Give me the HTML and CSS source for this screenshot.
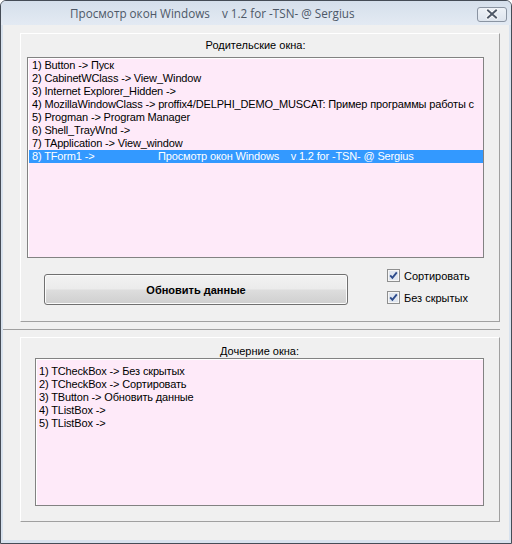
FILE: index.html
```html
<!DOCTYPE html>
<html>
<head>
<meta charset="utf-8">
<link rel="stylesheet" href="styles.css">
</head>
<body>
<div class="window">
  <div class="titlebar">
    <span class="title">Просмотр окон Windows    v 1.2 for -TSN- @ Sergius</span>
    <span class="close">
      <svg width="30" height="15" viewBox="0 0 30 15">
        <path d="M11 3.5 L19 10.5 M19 3.5 L11 10.5" fill="none" stroke="#ffffff" stroke-width="3.6" stroke-linecap="square"/>
        <path d="M11 3.5 L19 10.5 M19 3.5 L11 10.5" fill="none" stroke="#4f5968" stroke-width="2" stroke-linecap="square"/>
      </svg>
    </span>
  </div>
  <div class="client">
    <div class="panel panel-top">
      <div class="caption caption-top">Родительские окна:</div>
      <ul class="listbox listbox-top">
        <li>1) Button -&gt; Пуск</li>
        <li>2) CabinetWClass -&gt; View_Window</li>
        <li>3) Internet Explorer_Hidden -&gt;</li>
        <li>4) MozillaWindowClass -&gt; proffix4/DELPHI_DEMO_MUSCAT: Пример программы работы с</li>
        <li>5) Progman -&gt; Program Manager</li>
        <li>6) Shell_TrayWnd -&gt;</li>
        <li>7) TApplication -&gt; View_window</li>
        <li class="selected"><span class="tabstop">8) TForm1 -&gt;</span>Просмотр окон Windows    v 1.2 for -TSN- @ Sergius</li>
      </ul>
      <div class="controls">
        <button class="btn" type="button">Обновить данные</button>
        <div class="checks">
          <label class="check">
            <svg class="box" width="13" height="13" viewBox="0 0 13 13">
              <rect x="0.5" y="0.5" width="12" height="12" fill="#f6f6f6" stroke="#8e8f8f"/>
              <rect x="2" y="2" width="9" height="9" fill="#dfe6f0"/>
              <path d="M3.2 6.4 L5.4 8.8 L9.8 3.4" fill="none" stroke="#2c4b8c" stroke-width="1.9"/>
            </svg>
            <span>Сортировать</span>
          </label>
          <label class="check">
            <svg class="box" width="13" height="13" viewBox="0 0 13 13">
              <rect x="0.5" y="0.5" width="12" height="12" fill="#f6f6f6" stroke="#8e8f8f"/>
              <rect x="2" y="2" width="9" height="9" fill="#dfe6f0"/>
              <path d="M3.2 6.4 L5.4 8.8 L9.8 3.4" fill="none" stroke="#2c4b8c" stroke-width="1.9"/>
            </svg>
            <span>Без скрытых</span>
          </label>
        </div>
      </div>
    </div>
    <div class="splitter"></div>
    <div class="panel panel-bottom">
      <div class="caption caption-bottom">Дочерние окна:</div>
      <ul class="listbox listbox-bottom">
        <li>1) TCheckBox -&gt; Без скрытых</li>
        <li>2) TCheckBox -&gt; Сортировать</li>
        <li>3) TButton -&gt; Обновить данные</li>
        <li>4) TListBox -&gt;</li>
        <li>5) TListBox -&gt;</li>
      </ul>
    </div>
  </div>
</div>
</body>
</html>
```
FILE: styles.css
```css
html, body {
  margin: 0;
  padding: 0;
}
body {
  width: 512px;
  height: 544px;
  overflow: hidden;
  background: #ffffff;
  font-family: "Liberation Sans", Arial, sans-serif;
  font-size: 11px;
  color: #000000;
}
.window {
  width: 512px;
  height: 544px;
  box-sizing: border-box;
  border: 1px solid #454c56;
  border-radius: 6px 6px 0 0;
  background: #d8e2ee;
  display: flex;
  flex-direction: column;
  overflow: hidden;
}
.titlebar {
  height: 24px;
  flex: none;
  display: flex;
  align-items: flex-start;
  background: linear-gradient(#d5dfeb, #e3eaf3);
}
.title {
  flex: 1;
  padding-left: 69px;
  padding-top: 4px;
  font-family: "Open Sans", "Noto Sans", sans-serif;
  font-size: 11.7px;
  line-height: 16px;
  color: #4d5867;
  white-space: pre;
}
.close {
  flex: none;
  width: 30px;
  height: 15px;
  margin-top: 6px;
  margin-right: 4px;
  box-sizing: border-box;
  border: 1px solid #8a94a2;
  border-radius: 3px;
  background: linear-gradient(#eef2f7, #dde4ed);
  display: flex;
}
.close svg {
  margin: -1px;
}
.client {
  flex: 1;
  margin: 0 2px 3px 2px;
  background: #f0f0f0;
  padding: 8px 9px 0 17px;
  display: flex;
  flex-direction: column;
}
.panel {
  box-sizing: border-box;
  width: 480px;
  border-top: 1px solid #ffffff;
  border-left: 1px solid #ffffff;
  border-right: 1px solid #a0a0a0;
  border-bottom: 1px solid #a0a0a0;
  display: flex;
  flex-direction: column;
}
.panel-top {
  height: 289px;
}
.panel-bottom {
  height: 185px;
}
.splitter {
  height: 15px;
  margin-left: -17px;
  width: 497px;
  box-sizing: border-box;
  padding-top: 7px;
}
.splitter::before {
  content: "";
  display: block;
  height: 1px;
  background: #a0a0a0;
}
.caption {
  text-align: center;
  white-space: pre;
}
.caption-top {
  height: 23px;
  line-height: 23px;
  padding-left: 6px;
  width: 457px;
}
.caption-bottom {
  height: 13px;
  line-height: 13px;
  padding-top: 7px;
  padding-left: 14px;
  width: 449px;
}
.listbox {
  list-style: none;
  margin: 0;
  box-sizing: border-box;
  background: #feeaf9;
  border: 1px solid #828282;
  box-shadow: inset 1px 1px 0 #ffffff;
  overflow: hidden;
  letter-spacing: -0.15px;
}
.listbox li {
  height: 13px;
  line-height: 13px;
  white-space: pre;
  overflow: hidden;
  padding-left: 3px;
}
.listbox-top {
  margin-left: 6px;
  width: 457px;
  height: 201px;
  padding: 1px 0 0 1px;
}
.listbox-bottom {
  margin-left: 14px;
  width: 449px;
  height: 148px;
  padding: 6px 0 0 1px;
}
.listbox-bottom li {
  padding-left: 2px;
}
.listbox li.selected {
  background: #3399ff;
  color: #ffffff;
}
.tabstop {
  display: inline-block;
  width: 126px;
}
.controls {
  display: flex;
  align-items: flex-start;
}
.btn {
  margin: 16px 0 0 23px;
  width: 304px;
  height: 31px;
  box-sizing: border-box;
  border: 1px solid #707070;
  border-radius: 3px;
  background: linear-gradient(#f2f2f2 0%, #ebebeb 48%, #dddddd 52%, #cfcfcf 100%);
  box-shadow: inset 0 0 0 1px #fbfbfb;
  font-family: "Liberation Sans", Arial, sans-serif;
  font-size: 11px;
  font-weight: bold;
  color: #000000;
  padding: 0;
}
.checks {
  margin: 11px 0 0 39px;
  display: flex;
  flex-direction: column;
  gap: 9px;
}
.check {
  display: flex;
  align-items: center;
  height: 13px;
  gap: 4px;
  white-space: pre;
}
.box {
  flex: none;
  display: block;
}
```
